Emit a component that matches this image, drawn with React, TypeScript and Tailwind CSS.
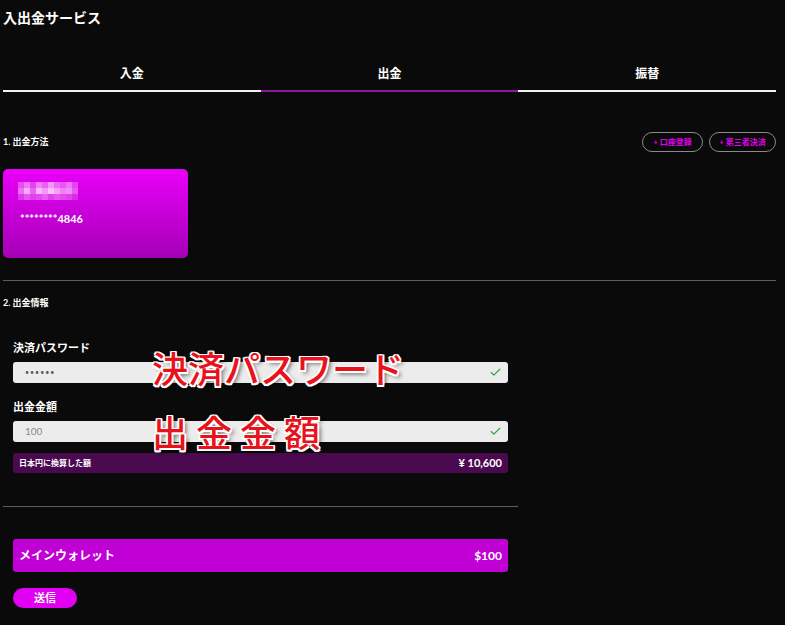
import { Check } from "lucide-react";

const jp = { fontFamily: '"Lato", "Noto Sans CJK JP", sans-serif' };

const blur = [
  [0.35, 0.55, 0.3, 0.6, 0.45, 0.7, 0.5, 0.4, 0.55, 0.3],
  [0.5, 0.8, 0.45, 0.85, 0.7, 0.9, 0.75, 0.6, 0.65, 0.4],
  [0.25, 0.4, 0.3, 0.35, 0.45, 0.3, 0.4, 0.35, 0.3, 0.2],
];

function Tab({ label, active }: { label: string; active?: boolean }) {
  return (
    <div
      className={`flex-1 text-center text-[12px] font-bold leading-[16px] text-white pb-[8px] border-b-2 ${
        active ? "border-[#8b1a9b]" : "border-[#f2f2f2]"
      }`}
    >
      {label}
    </div>
  );
}

function Field({ label, value, dim }: { label: string; value: string; dim?: boolean }) {
  return (
    <div>
      <div className="text-[11px] font-bold leading-[14px] text-white">{label}</div>
      <div className="mt-[7px] h-[21px] rounded-[3px] bg-[#ececec] flex items-center justify-between px-[12px]">
        <span className={dim ? "text-[10px] text-[#8a8a8a]" : "text-[7px] text-[#555] tracking-[1px]"}>{value}</span>
        <Check size={13} strokeWidth={2} className="text-[#2e9e44] -mr-[6px]" />
      </div>
    </div>
  );
}

export default function App() {
  return (
    <div className="relative min-h-[625px] bg-[#0a0a0a] text-white pl-[3px] pr-[9px] pt-[9px]" style={jp}>
      <h1 className="text-[14px] font-bold leading-[18px]">入出金サービス</h1>

      <div className="flex mt-[39px]">
        <Tab label="入金" />
        <Tab label="出金" active />
        <Tab label="振替" />
      </div>

      <div className="mt-[40px] h-[20px] flex items-center justify-between">
        <span className="text-[9px] font-bold">1. 出金方法</span>
        <div className="flex gap-[6px]">
          <button className="h-[20px] w-[61px] rounded-full border border-[#8a8a8a] text-[8px] font-bold text-[#e000f0]">
            + 口座登録
          </button>
          <button className="h-[20px] w-[67px] rounded-full border border-[#8a8a8a] text-[8px] font-bold text-[#e000f0]">
            + 第三者決済
          </button>
        </div>
      </div>

      <div className="mt-[17px] w-[185px] h-[89px] rounded-[5px] bg-gradient-to-b from-[#ea00fa] to-[#a500b6] pt-[13px] pl-[15px]">
        <div className="flex flex-col">
          {blur.map((row, i) => (
            <div key={i} className="flex">
              {row.map((o, j) => (
                <div key={j} className="w-[6px] h-[6px] bg-[#ffd6ff]" style={{ opacity: o }} />
              ))}
            </div>
          ))}
        </div>
        <div className="mt-[12px] ml-[2px] text-[11px] font-bold leading-[14px]">********4846</div>
      </div>

      <div className="mt-[22px] h-px bg-[#5e5e5e]" />

      <div className="mt-[15px] text-[9px] font-bold leading-[14px]">2. 出金情報</div>

      <div className="w-[515px]">
        <div className="px-[10px]">
          <div className="mt-[31px]">
            <Field label="決済パスワード" value="••••••" />
          </div>
          <div className="mt-[17px]">
            <Field label="出金金額" value="100" dim />
          </div>
          <div className="mt-[11px] h-[20px] rounded-[3px] bg-[#4b0a50] flex items-center justify-between px-[6px]">
            <span className="text-[8px] font-bold">日本円に換算した額</span>
            <span className="text-[11px] font-bold">¥ 10,600</span>
          </div>
        </div>

        <div className="mt-[33px] h-px bg-[#5e5e5e]" />

        <div className="px-[10px]">
          <div className="mt-[32px] h-[33px] rounded-[3px] bg-[#c000d4] flex items-center justify-between px-[6px]">
            <span className="text-[12px] font-bold">メインウォレット</span>
            <span className="text-[12px] font-bold">$100</span>
          </div>
          <button className="mt-[16px] h-[20px] w-[64px] rounded-full bg-[#e200f2] text-[11px] font-bold text-white">
            送信
          </button>
        </div>
      </div>

      <div
        className="absolute left-[152px] top-[347px] text-[36px] leading-[40px] font-medium text-[#e8121c] [text-shadow:1.5px_1.5px_0_#fff,-1.5px_-1.5px_0_#fff,1.5px_-1.5px_0_#fff,-1.5px_1.5px_0_#fff,0_1.5px_0_#fff,0_-1.5px_0_#fff,1.5px_0_0_#fff,-1.5px_0_0_#fff,3px_3px_4px_rgba(0,0,0,0.6)]"
        style={{ fontFamily: '"Noto Sans CJK JP", sans-serif' }}
      >
        決済パスワード
      </div>
      <div
        className="absolute left-[152px] top-[411px] text-[36px] leading-[40px] tracking-[8px] font-medium text-[#e8121c] [text-shadow:1.5px_1.5px_0_#fff,-1.5px_-1.5px_0_#fff,1.5px_-1.5px_0_#fff,-1.5px_1.5px_0_#fff,0_1.5px_0_#fff,0_-1.5px_0_#fff,1.5px_0_0_#fff,-1.5px_0_0_#fff,3px_3px_4px_rgba(0,0,0,0.6)]"
        style={{ fontFamily: '"Noto Sans CJK JP", sans-serif' }}
      >
        出金金額
      </div>
    </div>
  );
}
